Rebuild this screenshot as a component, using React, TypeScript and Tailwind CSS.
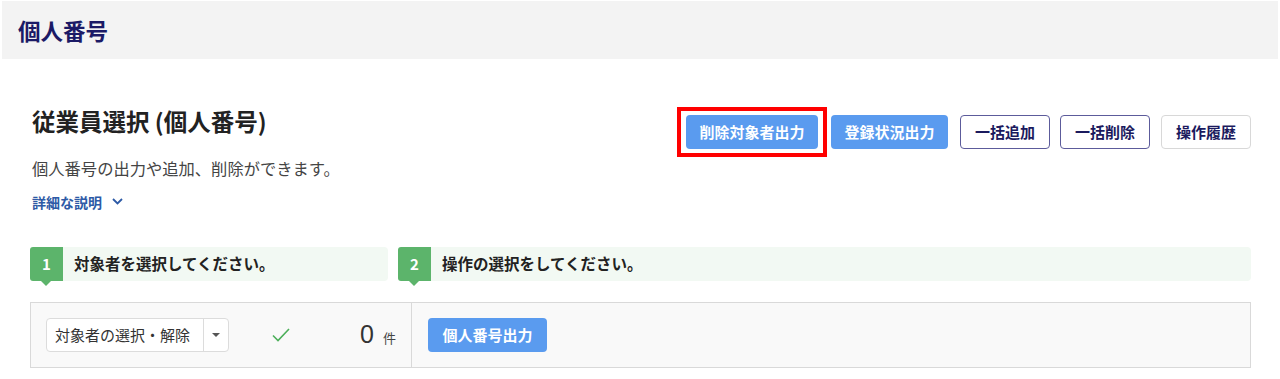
import React from "react";

const JP = { fontFamily: '"Noto Sans CJK JP", "Noto Sans", sans-serif' };

function Step({ n, text, className }: { n: string; text: string; className: string }) {
  return (
    <div className={`relative flex h-[34px] items-stretch ${className}`}>
      <div className="relative flex w-[33px] items-center justify-center rounded-l-[3px] bg-[#5cb46b] text-[15px] font-bold text-white">
        {n}
        <span className="absolute left-[11px] top-[34px] h-0 w-0 border-l-[5px] border-r-[5px] border-t-[5px] border-l-transparent border-r-transparent border-t-[#5cb46b]" />
      </div>
      <div className="flex flex-1 items-center rounded-r-[4px] bg-[#f2f9f3] pl-[11px] text-[15.5px] font-bold text-[#222]">
        {text}
      </div>
    </div>
  );
}

export default function App() {
  return (
    <div className="min-h-[379px] bg-white px-[2px] pt-[1px]" style={JP}>
      <header className="flex h-[58px] items-center bg-[#f3f3f3] pl-[16px]">
        <h1 className="text-[22.5px] font-bold leading-none text-[#1b1a66]">個人番号</h1>
      </header>

      <main className="pl-[28px] pr-[27px] pt-[51px]">
        <div className="flex items-start justify-between">
          <div>
            <h2 className="pl-[2px] text-[23.5px] font-bold leading-none text-[#222]">従業員選択 (個人番号)</h2>
            <p className="mt-[26px] pl-[2px] text-[16.3px] leading-none text-[#444]">
              個人番号の出力や追加、削除ができます。
            </p>
            <button className="mt-[19px] flex items-center gap-[10px] pl-[2px] text-[14px] font-bold leading-none text-[#2d5aa6]">
              詳細な説明
              <svg width="11" height="7" viewBox="0 0 11 7" fill="none">
                <path d="M1 1l4.5 4.5L10 1" stroke="#2d5aa6" strokeWidth="1.8" />
              </svg>
            </button>
          </div>

          <div className="mt-[5px] flex items-center">
            <div className="relative">
              <button className="h-[34px] w-[132px] rounded-[4px] bg-[#5a9bef] text-[15px] font-bold text-white">
                削除対象者出力
              </button>
              <span className="pointer-events-none absolute -bottom-[8px] -left-[9px] -right-[9px] -top-[8px] border-[4px] border-[#ff0000]" />
            </div>
            <button className="ml-[13px] h-[34px] w-[117px] rounded-[4px] bg-[#5a9bef] text-[15px] font-bold text-white">
              登録状況出力
            </button>
            <button className="ml-[12px] h-[34px] w-[90px] rounded-[4px] border border-[#5c5b9b] bg-white text-[15px] font-bold text-[#1b1a5e]">
              一括追加
            </button>
            <button className="ml-[10px] h-[34px] w-[90px] rounded-[4px] border border-[#5c5b9b] bg-white text-[15px] font-bold text-[#1b1a5e]">
              一括削除
            </button>
            <button className="ml-[11px] h-[34px] w-[90px] rounded-[4px] border border-[#d8d8d8] bg-white text-[15px] font-bold text-[#1b1a5e]">
              操作履歴
            </button>
          </div>
        </div>

        <div className="mt-[38px] flex gap-[10px]">
          <Step n="1" text="対象者を選択してください。" className="w-[358px]" />
          <Step n="2" text="操作の選択をしてください。" className="flex-1" />
        </div>

        <div className="mt-[21px] flex h-[66px] border border-[#d9d9d9] bg-[#f9f9f9]">
          <div className="flex w-[381px] items-center border-r border-[#d9d9d9] pl-[15px]">
            <div className="flex h-[34px] w-[183px] items-stretch rounded-[4px] border border-[#dcdcdc] bg-white">
              <div className="flex flex-1 items-center pl-[8px] text-[15px] text-[#333]">対象者の選択・解除</div>
              <div className="flex w-[25px] items-center justify-center border-l border-[#dcdcdc]">
                <span className="h-0 w-0 border-l-[4px] border-r-[4px] border-t-[4px] border-l-transparent border-r-transparent border-t-[#555]" />
              </div>
            </div>
            <svg className="ml-[43px]" width="18" height="14" viewBox="0 0 18 14" fill="none">
              <path d="M1 7.5l5 5L17 1" stroke="#4caf5a" strokeWidth="1.6" />
            </svg>
            <span
              className="ml-[70px] text-[25px] leading-none text-[#333]"
              style={{ fontFamily: '"Liberation Sans", Arial, sans-serif' }}
            >
              0
            </span>
            <span className="ml-[9px] mt-[6px] text-[13px] leading-none text-[#444]">件</span>
          </div>
          <div className="flex flex-1 items-center pl-[16px]">
            <button className="h-[34px] w-[119px] rounded-[4px] bg-[#5a9bef] text-[15px] font-bold text-white">
              個人番号出力
            </button>
          </div>
        </div>
      </main>
    </div>
  );
}
